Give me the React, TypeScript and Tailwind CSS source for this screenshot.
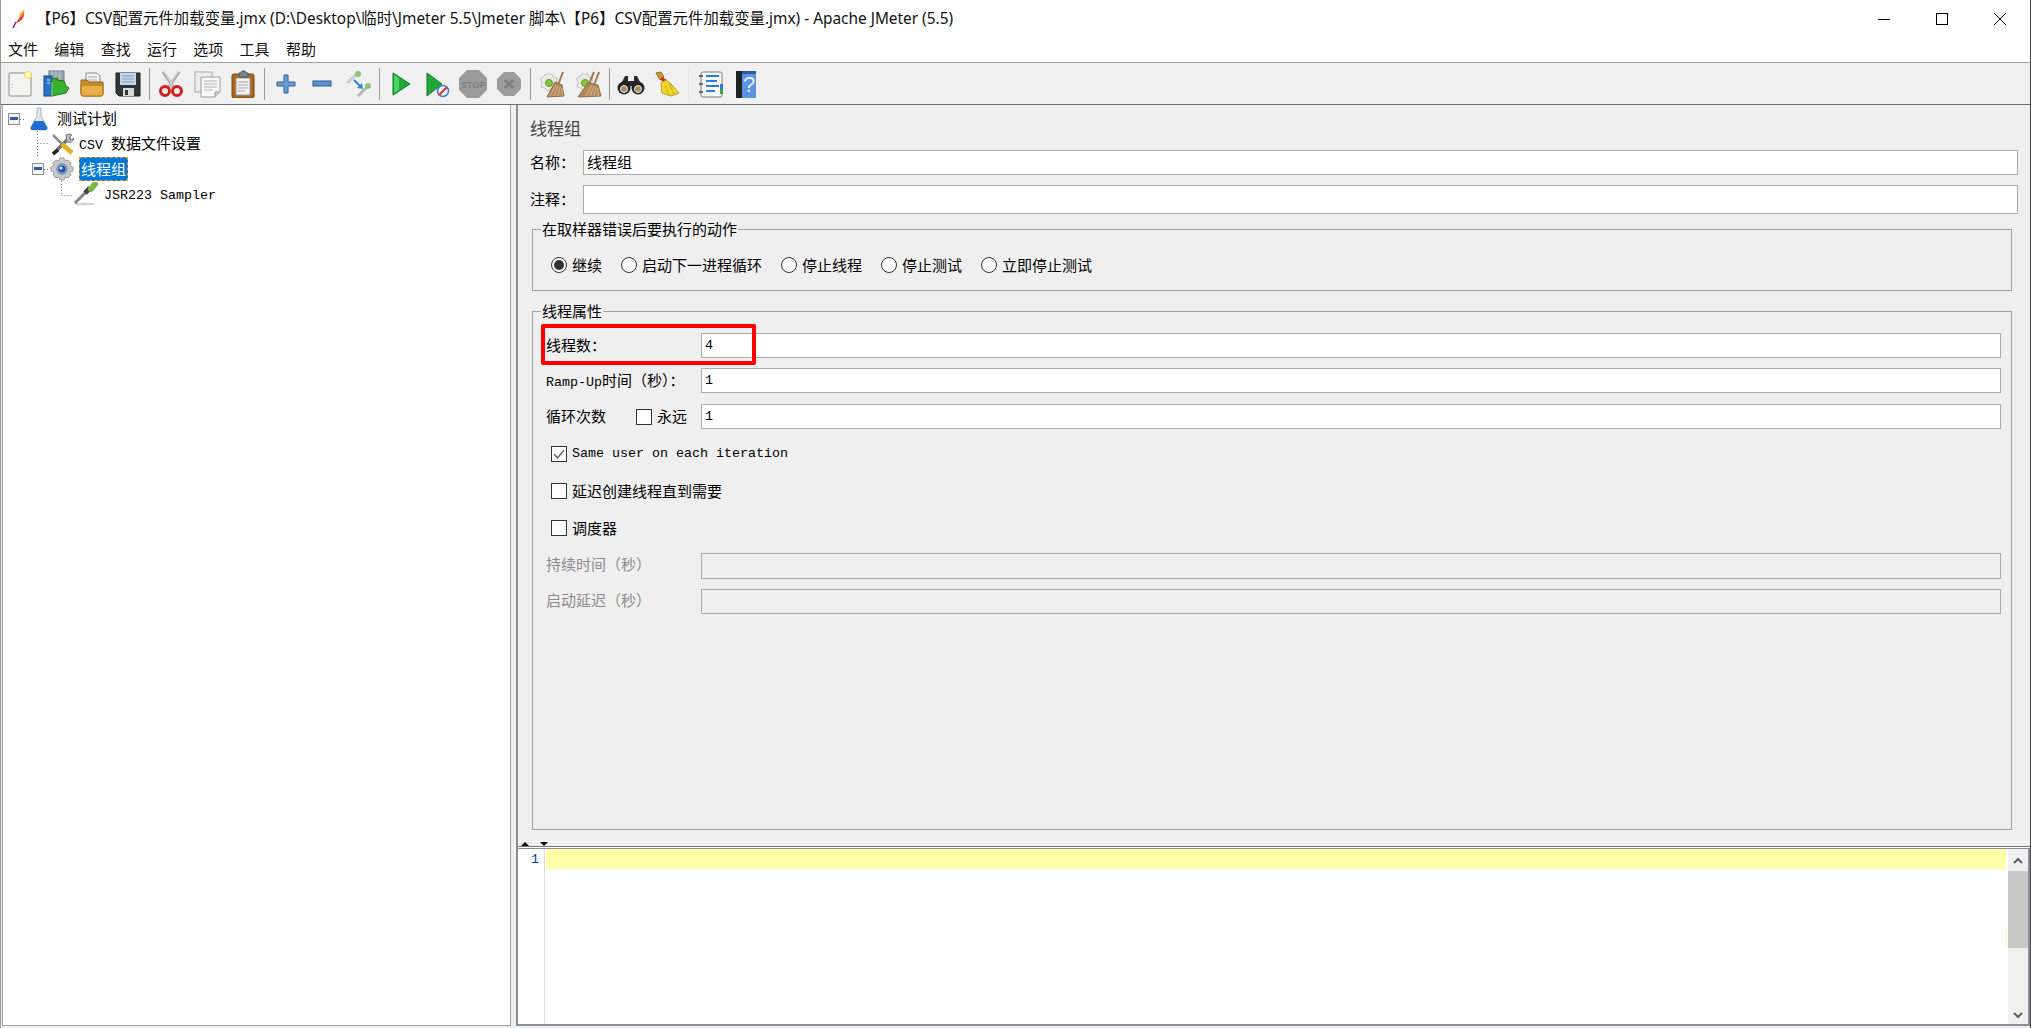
import type { ReactNode } from "react";

const Mono = ({ children }: { children: ReactNode }) => (
  <span className="font-['Liberation_Mono',monospace] text-[13.33px]">{children}</span>
);

function Svg({ children, w = 28, h = 28 }: { children: ReactNode; w?: number; h?: number }) {
  return (
    <svg width={w} height={h} viewBox={`0 0 ${w} ${h}`} className="shrink-0">
      {children}
    </svg>
  );
}

/* ---------- toolbar icons ---------- */
const NewIcon = () => (
  <Svg>
    <rect x="3" y="3" width="22" height="23" rx="1" fill="#f3f3f0" stroke="#8d8d8d" />
    <circle cx="22" cy="5" r="3.5" fill="#fff8b0" stroke="#e6d860" />
    <path d="M6 14v1M6 17v1" stroke="#aaa" />
  </Svg>
);
const TemplatesIcon = () => (
  <Svg>
    <rect x="7" y="1" width="15" height="18" fill="#9aa6b0" stroke="#6f7b85" />
    <path d="M10 1v18M14 1v18M18 1v18" stroke="#c3ccd3" />
    <rect x="2" y="6" width="8" height="20" fill="#2a72c4" stroke="#134a8c" />
    <path d="M5 10h3M5 13h3" stroke="#cfe4fa" />
    <path d="M10 9l5-1v2l7 1 2 5 3 2-3 5-14 3z" fill="#38b030" stroke="#1c7a18" />
    <path d="M10 12v14" stroke="#8fe088" />
  </Svg>
);
const OpenIcon = () => (
  <Svg>
    <path d="M8 3h11l3 3v8H8z" fill="#f2f2f2" stroke="#8c8c8c" />
    <path d="M10 7h9M10 10h9" stroke="#aaa" />
    <path d="M3 10h6l2 2h14v12a2 2 0 0 1-2 2H5a2 2 0 0 1-2-2z" fill="#c98d2a" stroke="#8f6110" />
    <path d="M3 15h22v9a2 2 0 0 1-2 2H5a2 2 0 0 1-2-2z" fill="#e9ae48" stroke="#a5741c" />
  </Svg>
);
const SaveIcon = () => (
  <Svg>
    <path d="M2 3h24v23H5l-3-3z" fill="#32363c" stroke="#1d1f22" />
    <rect x="6" y="3" width="16" height="12" fill="#c6d6ea" />
    <path d="M8 6h12M8 9h12M8 12h12" stroke="#7f9dc3" />
    <rect x="9" y="18" width="11" height="8" fill="#d8d8d8" />
    <rect x="11" y="20" width="3" height="5" fill="#333" />
  </Svg>
);
const CutIcon = () => (
  <Svg>
    <path d="M6 2l11 16M22 2L11 18" stroke="#a9a9a9" strokeWidth="3" />
    <path d="M7 2l10 16M21 2L11 18" stroke="#dcdcdc" />
    <circle cx="8" cy="21" r="4.5" fill="none" stroke="#cf1f1f" strokeWidth="3" />
    <circle cx="20" cy="21" r="4.5" fill="none" stroke="#cf1f1f" strokeWidth="3" />
  </Svg>
);
const CopyIcon = () => (
  <Svg>
    <rect x="2" y="2" width="17" height="20" fill="#eee" stroke="#a8a8a8" />
    <path d="M8 7h19v15l-5 5H8z" fill="#f8f8f8" stroke="#9c9c9c" />
    <path d="M11 11h13M11 14h13M11 17h13M11 20h9" stroke="#b5b5b5" />
    <path d="M22 27v-5h5" fill="#d0d0d0" stroke="#9c9c9c" />
  </Svg>
);
const PasteIcon = () => (
  <Svg>
    <rect x="3" y="4" width="22" height="24" rx="2" fill="#a86a20" stroke="#744510" />
    <path d="M7 8h14v17H7z" fill="#f2f2f2" stroke="#999" />
    <path d="M9 12h10M9 15h10M9 18h10M9 21h7" stroke="#a5a5a5" />
    <path d="M10 3h2l1-2h3l1 2h2v4h-9z" fill="#7d858c" stroke="#555" />
  </Svg>
);
const PlusIcon = () => (
  <Svg>
    <path d="M12 5h4v7h7v4h-7v7h-4v-7H5v-4h7z" fill="#6d9ed2" stroke="#2c5f9c" />
  </Svg>
);
const MinusIcon = () => (
  <Svg>
    <rect x="5" y="11" width="18" height="5" fill="#5e92cc" stroke="#2c5f9c" />
  </Svg>
);
const ToggleIcon = () => (
  <Svg>
    <path d="M3 13l10-9" stroke="#c9c9c9" strokeWidth="3" />
    <circle cx="14" cy="4" r="3" fill="#8cc47c" />
    <path d="M14 26l9-9" stroke="#b9b9b9" strokeWidth="3" />
    <circle cx="24" cy="16" r="3" fill="#8cc47c" />
    <path d="M10 10l7 7" stroke="#2f84d8" strokeWidth="2" />
    <path d="M19 19l-6-1 5-5z" fill="#2f84d8" />
  </Svg>
);
const PlayIcon = () => (
  <Svg>
    <path d="M6 3l17 11L6 25z" fill="#1faa35" stroke="#0f7a22" />
    <path d="M7 5v18l5-3V8z" fill="#4bd160" />
  </Svg>
);
const PlayNoPauseIcon = () => (
  <Svg>
    <path d="M4 3l15 11L4 26z" fill="#22a838" stroke="#127a24" />
    <circle cx="20" cy="21" r="5.500" fill="#eaf2fb" stroke="#3a7fca" strokeWidth="1.500" />
    <path d="M16 25l8-8" stroke="#e03030" strokeWidth="2" />
  </Svg>
);
const StopIcon = () => (
  <Svg>
    <path d="M8 0h12l8 8v12l-8 8H8l-8-8V8z" fill="#9b9b9b" />
    <text x="14" y="17.500" textAnchor="middle" fontSize="9" fontWeight="700" fill="#7e7e7e" fontFamily="Liberation Sans">
      STOP
    </text>
  </Svg>
);
const ShutdownIcon = () => (
  <Svg>
    <path d="M9 2h10l7 7v10l-7 7H9l-7-7V9z" fill="#9c9c9c" />
    <path d="M10 10l8 8M18 10l-8 8" stroke="#7d7d7d" strokeWidth="3" />
  </Svg>
);
const ClearIcon = ({ both }: { both?: boolean }) => (
  <Svg>
    <path
      d="M8 4h6l1 3 4 1-1 5 2 3-3 4-4-1-3 2-3-3-4-1 1-5-2-3 4-3z"
      fill="#e8e8e4"
      stroke="#c4c4c0"
    />
    <circle cx="11" cy="13" r="3.500" fill="#86c440" stroke="#5f9a24" />
    <path d="M25 2l-5 13" stroke="#a17a4c" strokeWidth="2" />
    {both && <path d="M20 2l-5 12" stroke="#a17a4c" strokeWidth="2" />}
    <path d={both ? "M14 13l10 2 3 11-23 1z" : "M17 12l7 3 2 11-17 1z"} fill="#b08a5c" stroke="#8e6c42" />
    <path d="M12 26l6-11M16 26l4-10M20 26l2-9M24 26l0-8" stroke="#dcb98c" />
  </Svg>
);
const SearchIcon = () => (
  <Svg w={30}>
    <path d="M9 6h3v5h6V6h3l5 10H4z" fill="#2a2a2a" />
    <circle cx="8" cy="18" r="6.500" fill="#222" />
    <circle cx="22" cy="18" r="6.500" fill="#222" />
    <circle cx="8" cy="19" r="3.500" fill="#a88a5a" stroke="#eee" />
    <circle cx="22" cy="19" r="3.500" fill="#a88a5a" stroke="#eee" />
  </Svg>
);
const BroomIcon = () => (
  <Svg>
    <path d="M3 3l5-1 3 5-4 3z" fill="#c89a3a" stroke="#8f6a1c" />
    <path d="M8 8l5 3" stroke="#b0801e" strokeWidth="3" />
    <path d="M9 7l6 5-2 3-5-5z" fill="#d82020" />
    <path d="M13 10l5 4 8 9-8 3-9-3-1-10z" fill="#f2d52e" stroke="#bd9d12" />
    <path d="M12 15l4 10M16 13l5 11" stroke="#c9a816" />
  </Svg>
);
const FunctionIcon = () => (
  <Svg>
    <rect x="5" y="2" width="21" height="25" rx="2" fill="#f8f8f8" stroke="#7d7d7d" />
    <path d="M3 6h4M3 14h4M3 22h4" stroke="#444" strokeWidth="1.500" />
    <path d="M10 6h13M10 11h11M10 16h13M10 21h9" stroke="#2a7be0" strokeWidth="2" />
    <rect x="24" y="14" width="3" height="5" fill="#2a7be0" />
    <rect x="24" y="19" width="3" height="5" fill="#3aa040" />
  </Svg>
);
const HelpIcon = () => (
  <Svg>
    <rect x="4" y="1" width="20" height="27" rx="1" fill="#5b93e0" />
    <rect x="4" y="1" width="6" height="27" fill="#1d2125" />
    <rect x="10" y="1" width="14" height="3" fill="#2b5a9a" />
    <text x="17" y="22" textAnchor="middle" fontSize="22" fill="#e4eefa" fontFamily="Liberation Sans">
      ?
    </text>
  </Svg>
);

/* ---------- tree icons ---------- */
const FlaskIcon = () => (
  <Svg w={22} h={24}>
    <path d="M9 1h4v8l6 11a2 2 0 0 1-2 3H5a2 2 0 0 1-2-3l6-11z" fill="#dfe6ef" stroke="#a8b4c4" />
    <path d="M6.500 14h9l3.500 6a2 2 0 0 1-2 3H5a2 2 0 0 1-2-3z" fill="#1f6fd0" />
  </Svg>
);
const WrenchIcon = () => (
  <Svg w={24} h={24}>
    <path d="M3 22L20 5" stroke="#6e7378" strokeWidth="3.500" />
    <path d="M16 3a5 5 0 0 1 6 0l-3 3 2 2 3-2a5 5 0 0 1-7 4z" fill="#b9bdc2" stroke="#777" />
    <path d="M3 3l10 10" stroke="#8a8f95" strokeWidth="2.500" />
    <path d="M12 12l10 9" stroke="#e3b21c" strokeWidth="4.500" />
    <path d="M3 22l5-4" stroke="#222" strokeWidth="3.500" />
  </Svg>
);
const GearIcon = () => (
  <Svg w={24} h={24}>
    <path
      d="M10 1h4l1 3 3-1 3 3-1 3 3 1v4l-3 1 1 3-3 3-3-1-1 3h-4l-1-3-3 1-3-3 1-3-3-1v-4l3-1-1-3 3-3 3 1z"
      fill="#c6cacd"
      stroke="#9da2a6"
    />
    <circle cx="12" cy="12" r="6" fill="#8f9bb3" />
    <circle cx="12" cy="12" r="3.500" fill="#1f55b8" />
    <circle cx="11" cy="11" r="1.500" fill="#dce8fa" />
  </Svg>
);
const PipetteIcon = () => (
  <Svg w={26} h={24}>
    <ellipse cx="12" cy="22" rx="11" ry="1.500" fill="#d8d8d8" />
    <path d="M2 21l13-13" stroke="#888" strokeWidth="3" />
    <path d="M12 11l5 -5" stroke="#444" strokeWidth="5" />
    <path d="M18 7l4-5" stroke="#79b84e" strokeWidth="6" strokeLinecap="round" />
  </Svg>
);

const ExpandBox = () => (
  <span className="flex h-[12px] w-[12px] shrink-0 items-center justify-center border border-[#8e8f8f] bg-[#f4f4f4]">
    <span className="h-[3px] w-[8px] bg-[#2f5ba8]" />
  </span>
);

function Toolbar() {
  const groups: ReactNode[][] = [
    [<NewIcon />, <TemplatesIcon />, <OpenIcon />, <SaveIcon />],
    [<CutIcon />, <CopyIcon />, <PasteIcon />],
    [<PlusIcon />, <MinusIcon />, <ToggleIcon />],
    [<PlayIcon />, <PlayNoPauseIcon />, <StopIcon />, <ShutdownIcon />],
    [<ClearIcon />, <ClearIcon both />],
    [<SearchIcon />, <BroomIcon />],
    [<FunctionIcon />, <HelpIcon />],
  ];
  return (
    <div className="flex h-[42px] shrink-0 items-center border-b border-[#6e6e6e] bg-[#f0f0f0] pl-px">
      {groups.map((group, i) => (
        <div key={i} className="flex items-center">
          {i > 0 && (
            <div className="flex h-[32px] w-[7px] justify-center">
              <div className={i === 6 ? "w-px bg-[#e4e4e4]" : "w-px bg-[#9a9a9a]"} />
            </div>
          )}
          {group.map((icon, j) => (
            <div key={j} className="flex h-[36px] w-[36px] items-center justify-center">
              {icon}
            </div>
          ))}
        </div>
      ))}
    </div>
  );
}

function Tree() {
  return (
    <div className="relative ml-px w-[509px] border-x border-b border-[#a0a0a0] bg-white pt-px text-[15px] text-black">
      <svg className="absolute left-0 top-0" width="100" height="110" fill="none" stroke="#777" strokeDasharray="1 2">
        <path d="M17 14.500h6M34.500 26v27M34.500 38.500h12M41 64.500h6M58.500 76v14M58.500 90.500h12" />
      </svg>
      <div className="flex h-[25px] items-center pl-[5px]">
        <ExpandBox />
        <span className="ml-[8px]"><FlaskIcon /></span>
        <span className="ml-[7px]">测试计划</span>
      </div>
      <div className="flex h-[25px] items-center pl-[47px]">
        <WrenchIcon />
        <span className="ml-[5px]"><Mono>CSV </Mono>数据文件设置</span>
      </div>
      <div className="flex h-[25px] items-center pl-[29px]">
        <ExpandBox />
        <span className="ml-[6px]"><GearIcon /></span>
        <span className="ml-[5px] border border-dashed border-[#f59a23] bg-[#0078d7] px-[1px] leading-[22px] text-white">线程组</span>
      </div>
      <div className="flex h-[25px] items-center pl-[70px]">
        <PipetteIcon />
        <span className="ml-[5px]"><Mono>JSR223 Sampler</Mono></span>
      </div>
    </div>
  );
}

function TextBox({ value, disabled, h = "h-[25px]" }: { value?: ReactNode; disabled?: boolean; h?: string }) {
  return (
    <div
      className={`flex flex-1 items-center border border-[#ababab] pl-[3px] ${h} ${
        disabled ? "bg-[#efefef]" : "bg-white"
      }`}
    >
      {value}
    </div>
  );
}

function Radio({ label, checked }: { label: string; checked?: boolean }) {
  return (
    <div className="flex items-center gap-[5px]">
      <span className="flex h-[16px] w-[16px] items-center justify-center rounded-full border border-[#333] bg-white">
        {checked && <span className="h-[10px] w-[10px] rounded-full bg-[#333]" />}
      </span>
      {label}
    </div>
  );
}

function Check({ checked }: { checked?: boolean }) {
  return (
    <span className="flex h-[16px] w-[16px] shrink-0 items-center justify-center border border-[#333] bg-white">
      {checked && (
        <svg width="12" height="12" viewBox="0 0 12 12" fill="none" stroke="#666" strokeWidth="1.500">
          <path d="M1 6l3.500 4L11 2" />
        </svg>
      )}
    </span>
  );
}

function Form() {
  return (
    <div className="h-[736px] shrink-0 bg-[#efefef] pl-[12px] pr-[12px] text-[15px] text-black">
      <div className="pt-[11px] text-[17px] leading-[24px] text-[#444]">线程组</div>
      <div className="mt-[10px] flex items-center">
        <div className="w-[53px]">名称：</div>
        <TextBox value="线程组" />
      </div>
      <div className="mt-[10px] flex items-center">
        <div className="w-[53px]">注释：</div>
        <TextBox h="h-[29px]" />
      </div>

      <fieldset className="ml-[2px] mr-[6px] mt-[5px] h-[72px] border border-[#a3a3a3]">
        <legend className="ml-[8px] px-[1px] leading-[20px]">在取样器错误后要执行的动作</legend>
        <div className="flex items-center gap-[19px] pl-[18px] pt-[15px]">
          <Radio label="继续" checked />
          <Radio label="启动下一进程循环" />
          <Radio label="停止线程" />
          <Radio label="停止测试" />
          <Radio label="立即停止测试" />
        </div>
      </fieldset>

      <fieldset className="ml-[2px] mr-[6px] mt-[10px] h-[529px] border border-[#a3a3a3]">
        <legend className="ml-[8px] px-[1px] leading-[20px]">线程属性</legend>
        <div className="pl-[13px] pr-[10px]">
          <div className="relative mt-[12px] flex items-center">
            <div className="w-[155px]">线程数：</div>
            <TextBox value={<Mono>4</Mono>} />
            <div className="absolute left-[-5px] top-[-9px] h-[41px] w-[215px] rounded-[2px] border-4 border-[#ff0000]" />
          </div>
          <div className="mt-[10px] flex items-center">
            <div className="w-[155px]"><Mono>Ramp-Up</Mono>时间（秒）：</div>
            <TextBox value={<Mono>1</Mono>} />
          </div>
          <div className="mt-[11px] flex items-center">
            <div className="w-[90px]">循环次数</div>
            <Check />
            <div className="ml-[5px] w-[44px]">永远</div>
            <TextBox value={<Mono>1</Mono>} />
          </div>
          <div className="mt-[17px] flex h-[16px] items-center gap-[5px] pl-[5px]">
            <Check checked />
            <Mono>Same user on each iteration</Mono>
          </div>
          <div className="mt-[21px] flex h-[16px] items-center gap-[5px] pl-[5px]">
            <Check />
            延迟创建线程直到需要
          </div>
          <div className="mt-[21px] flex h-[16px] items-center gap-[5px] pl-[5px]">
            <Check />
            调度器
          </div>
          <div className="mt-[17px] flex items-center text-[#8c8c8c]">
            <div className="w-[155px] pb-[3px]">持续时间（秒）</div>
            <TextBox disabled h="h-[26px]" />
          </div>
          <div className="mt-[10px] flex items-center text-[#8c8c8c]">
            <div className="w-[155px] pb-[3px]">启动延迟（秒）</div>
            <TextBox disabled />
          </div>
        </div>
      </fieldset>
    </div>
  );
}

function Editor() {
  return (
    <div className="flex min-h-0 flex-1 border-y border-r-2 border-y-[#8a8f96] border-r-[#8a8f96] border-b-2 bg-white">
      <div className="w-[27px] shrink-0 border-r border-[#dcdcdc] pr-[5px] text-right text-[14px] leading-[16px] text-[#0a3aa8]">
        <Mono>1</Mono>
      </div>
      <div className="flex-1 pl-px">
        <div className="h-[20px] bg-[#ffffaa]" />
      </div>
      <div className="flex w-[2px] flex-col justify-end pb-[77px]">
        <div className="h-[20px] w-px bg-[#ffffaa]" />
      </div>
      <div className="flex w-[20px] shrink-0 flex-col bg-[#f0f0f0]">
        <div className="flex h-[22px] items-center justify-center">
          <svg width="10" height="7" viewBox="0 0 10 7" fill="none" stroke="#606060" strokeWidth="2"><path d="M1 6l4-4 4 4" /></svg>
        </div>
        <div className="h-[77px] bg-[#c8c8c8]" />
        <div className="flex flex-1 items-end justify-center pb-[5px]">
          <svg width="10" height="7" viewBox="0 0 10 7" fill="none" stroke="#606060" strokeWidth="2"><path d="M1 1l4 4 4-4" /></svg>
        </div>
      </div>
    </div>
  );
}

export default function App() {
  return (
    <div className="flex h-[1028px] w-[2031px] flex-col overflow-hidden border-x border-l-[#9a9a9a] border-r-[#444] bg-white font-['Noto_Sans_CJK_SC',sans-serif]">
      <div className="flex h-[36px] shrink-0 items-center pt-[2px] font-['Noto_Sans','Noto_Sans_CJK_SC',sans-serif] text-[15.400px] text-[#111]">
        <div className="ml-[9px] w-[26px]">
          <svg width="16" height="20" viewBox="0 0 16 20">
            <path d="M3 19L14 1c1 5-1 10-5 12l-4 2z" fill="#e8432e" />
            <path d="M9 6l5-5c0 3-1 5-3 7z" fill="#f5a623" />
            <path d="M3 19l3-6" stroke="#7a2a8a" strokeWidth="1.500" />
          </svg>
        </div>
        <div className="flex-1 whitespace-nowrap">
          【P6】CSV配置元件加载变量.jmx (D:\Desktop\临时\Jmeter 5.5\Jmeter 脚本\【P6】CSV配置元件加载变量.jmx) - Apache JMeter (5.5)
        </div>
        <div className="flex h-[34px] items-center gap-[46px] pr-[24px]">
          <div className="h-px w-[12px] bg-black" />
          <div className="h-[12px] w-[12px] border border-black" />
          <svg width="12" height="12" viewBox="0 0 12 12" stroke="#111" fill="none"><path d="M0 0l12 12M12 0L0 12" /></svg>
        </div>
      </div>

      <div className="flex h-[27px] shrink-0 items-center gap-[16.300px] border-b border-[#a0a0a0] pl-[7px] text-[15px] text-[#111]">
        {["文件", "编辑", "查找", "运行", "选项", "工具", "帮助"].map((m) => (
          <span key={m}>{m}</span>
        ))}
      </div>

      <Toolbar />

      <div className="flex min-h-0 flex-1 bg-[#efefef] pb-[2px]">
        <div className="flex">
          <Tree />
        </div>
        <div className="w-[5px] shrink-0" />
        <div className="flex min-w-0 flex-1 flex-col border-l-2 border-[#8a8f96]">
          <Form />
          <div className="h-px shrink-0 bg-white" />
          <div className="flex h-[4px] shrink-0 items-center gap-[8px] pl-[3px]">
            <span className="h-0 w-0 border-x-[4px] border-b-[4px] border-x-transparent border-b-black" />
            <span className="ml-[3px] h-0 w-0 border-x-[4px] border-t-[4px] border-x-transparent border-t-black" />
          </div>
          <div className="h-px shrink-0 bg-[#777]" />
          <div className="h-px shrink-0 bg-white" />
          <Editor />
        </div>
      </div>
    </div>
  );
}
